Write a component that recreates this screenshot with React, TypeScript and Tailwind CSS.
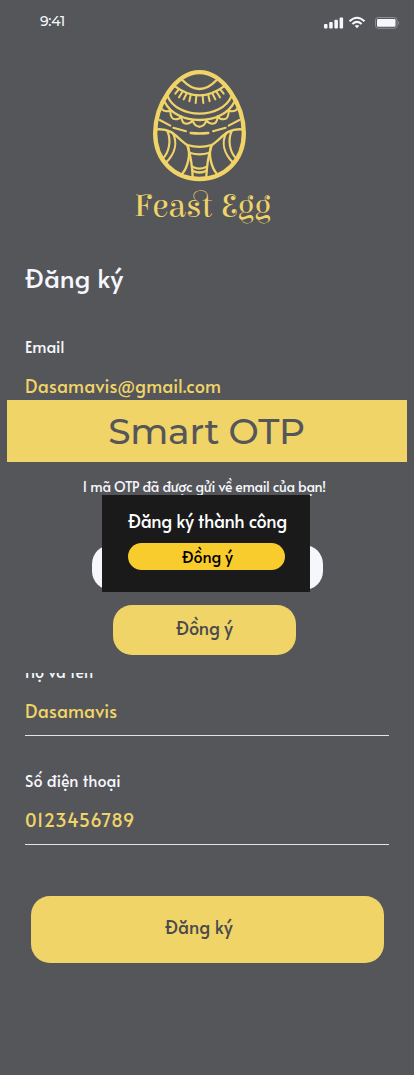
import React from "react";

function Egg() {
  const half = (
    <>
      <path strokeWidth="6" d="M146 88 L136 101 M157 96 L147 112 M169 102 L161 118 M182 106 L178 124 M199 108 L197 129" />
      <path strokeWidth="6" d="M95 146 Q102 157 121 152 C121 170 128 178 137 178 Q148 178 154 169 C155 185 161 191 169 191 Q181 191 188 181 C192 195 199 200 208.500 200" />
      <path strokeWidth="6" d="M89 180 L121 197 M130 203 L168 214" />
      <path d="M82 208 C130 204 142 238 172 255 C184 280 173 323 156 342" />
      <path strokeWidth="6.500" d="M112 213 C124 240 119 277 96 298 M129 220 C142 247 137 280 106 310" />
      <path d="M173 259 C183 292 187 320 188 350" />
    </>
  );
  return (
    <svg viewBox="0 0 435 375" className="h-[125px] w-[145px]" fill="none" stroke="#f0d468" strokeWidth="7" strokeLinecap="round" strokeLinejoin="round">
      <path strokeWidth="13" d="M208.500 36.500 C279 36.500 341.500 134 341.500 220 C341.500 301 284 357 208.500 357 C133 357 75.500 301 75.500 220 C75.500 134 138 36.500 208.500 36.500Z" />
      <path d="M157 60 Q208.500 114 260 60 M135 79 Q208.500 133 282 79 M113 109 C142 178 275 178 304 109 M104 126 C140 198 277 198 313 126" />
      {half}
      <g transform="translate(417 0) scale(-1 1)">{half}</g>
      <path d="M182 219 Q208.500 222 235 219 M172 255 Q208.500 266 245 255 M181 279 Q208.500 287 236 279 M189 321 Q208.500 331 228 321 M188 332 Q208.500 343 229 332" />
    </svg>
  );
}

function StatusBar() {
  return (
    <header className="flex h-[44px] items-center justify-between pr-[14px] pl-[40px]">
      <span className="-mt-[2px] font-['Montserrat','Inter',sans-serif] text-[14px] leading-[16px] font-medium tracking-[-0.3px]">9:41</span>
      <svg viewBox="0 0 76 14" className="mt-[2px] h-[14px] w-[76px]" fill="#f6f7fc">
        <rect x="0" y="8" width="3.500" height="4.500" rx="1" />
        <rect x="5.200" y="6" width="3.500" height="6.500" rx="1" />
        <rect x="10.400" y="3.700" width="3.500" height="8.800" rx="1" />
        <rect x="15.600" y="1.500" width="3.500" height="11" rx="1" />
        <g fill="none" stroke="#f6f7fc" strokeWidth="2">
          <path d="M25.500 5.300 Q33 -1.800 40.500 5.300" />
          <path d="M28.400 8 Q33 3.800 37.600 8" />
        </g>
        <path d="M30.700 9.800 Q33 8.100 35.300 9.800 L33 12.300Z" />
        <rect x="51.500" y="1.500" width="21.500" height="10.800" rx="2.700" fill="none" stroke="#8e8f94" />
        <rect x="53" y="3" width="18.500" height="7.800" rx="1.300" />
        <path d="M74.200 5 Q76.200 7 74.200 9Z" fill="#8e8f94" />
      </svg>
    </header>
  );
}

export default function App() {
  return (
    <div className="relative h-[1075px] w-[414px] overflow-hidden bg-[#55565a] font-['Alata','Lato',sans-serif] text-[#f6f7fc]">
      <StatusBar />
      <div className="flex h-[204px] flex-col pt-[16px] pl-[130px]">
        <Egg />
        <div className="h-[40px] w-[150px] pl-[4px] font-['Elsie_Swash_Caps','Elsie','Liberation_Serif',serif] text-[33px] leading-[43px] whitespace-nowrap text-[#f0d468]">
          Feast Egg
        </div>
      </div>
      <main className="flex flex-col px-[25px]">
        <h1 className="h-[80px] pt-[11px] text-[26px] leading-[36px] tracking-[0.2px]">Đăng ký</h1>
        <div className="h-[109px]">
          <div className="pt-[7px] text-[16px] leading-[22px] tracking-[0.1px]">Email</div>
          <div className="pt-[17px] text-[18px] leading-[24px] tracking-[0.3px] text-[#f0d468]">Dasamavis@gmail.com</div>
        </div>
        <div className="h-[216px]" />
        <div className="h-[83px] border-b border-[#e4e4e6]">
          <div className="pt-[7px] text-[16px] leading-[22px] tracking-[0.1px]">Họ và tên</div>
          <div className="pt-[17px] text-[18px] leading-[24px] tracking-[0.25px] text-[#f0d468]">Dasamavis</div>
        </div>
        <div className="mt-[26px] h-[83px] border-b border-[#e4e4e6]">
          <div className="pt-[7px] text-[16px] leading-[22px] tracking-[0.1px]">Số điện thoại</div>
          <div className="pt-[17px] text-[18px] leading-[24px] tracking-[0.8px] text-[#f0d468]">0123456789</div>
        </div>
        <button className="mt-[51px] ml-[6px] flex h-[67px] w-[353px] items-center rounded-[19px] bg-[#f0d468] pb-[5px] pl-[134px] text-[18px] leading-[24px] tracking-[0.1px] text-[#4a4a4c]">Đăng ký</button>
      </main>

      <section className="absolute top-[400px] left-[7px] flex h-[273px] w-[400px] flex-col items-center bg-[#55565a]">
        <h2 className="h-[62px] w-full bg-[#f0d468] pr-[1px] text-center font-['Montserrat','Inter',sans-serif] text-[36px] leading-[62px] font-medium tracking-[-0.25px] text-[#55565a]">Smart OTP</h2>
        <p className="mt-[15px] mr-[6px] h-[20px] text-[14px] leading-[20px] tracking-[-0.21px] whitespace-nowrap">1 mã OTP đã được gửi về email của bạn!</p>
        <div className="mt-[48px] h-[45px] w-[231px] rounded-[19px] bg-[#f6f7fc]" />
        <button className="mt-[15px] mr-[5px] h-[50px] w-[183px] rounded-[19px] bg-[#f0d468] pb-[5px] text-[18px] leading-[24px] tracking-[-0.1px] text-[#4a4a4c]">Đồng ý</button>
      </section>

      <div role="dialog" className="absolute top-[495px] left-[102px] flex h-[97px] w-[208px] flex-col items-center bg-[#1a1a1a]">
        <p className="mt-[14px] h-[24px] pl-[3px] text-[18px] leading-[24px] tracking-[-0.2px] whitespace-nowrap text-white">Đăng ký thành công</p>
        <button className="mt-[10px] h-[27px] w-[157px] rounded-full bg-[#f8cc2c] pl-[3px] text-[16px] leading-[27px] text-black">Đồng ý</button>
      </div>
    </div>
  );
}
